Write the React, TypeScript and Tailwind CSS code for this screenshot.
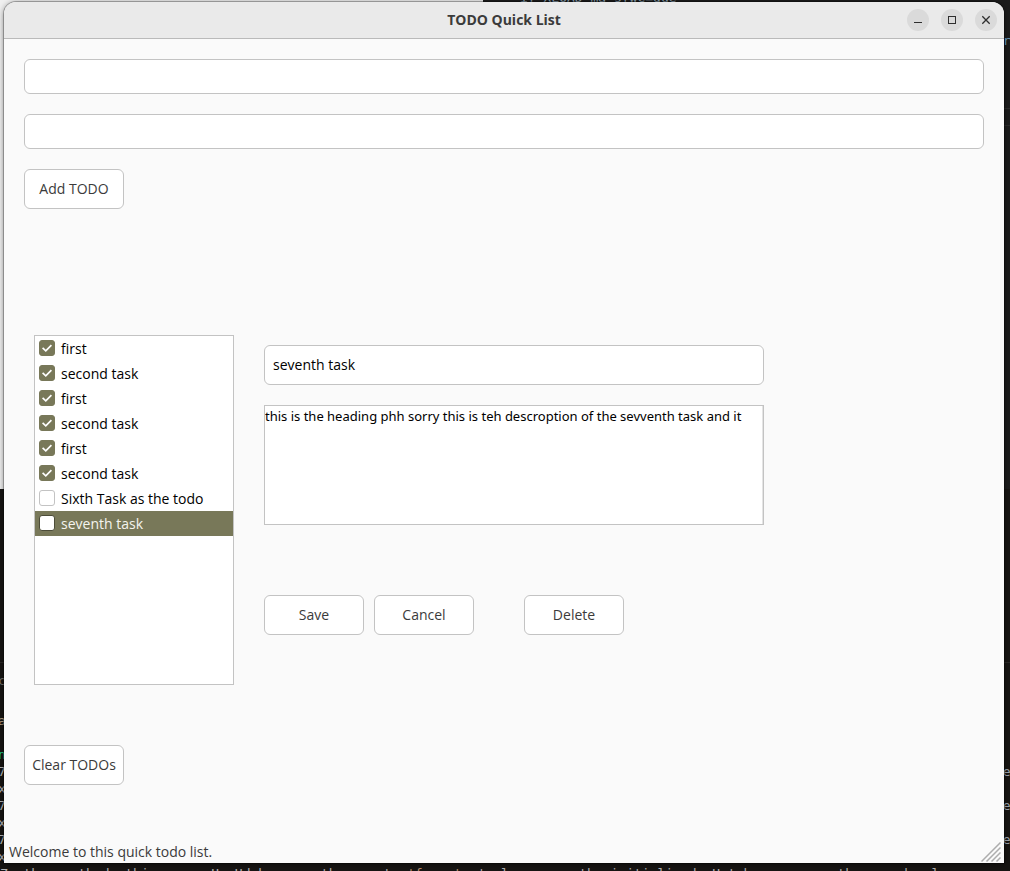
import { useState } from "react";

const initialTasks = [
  { title: "first", done: true },
  { title: "second task", done: true },
  { title: "first", done: true },
  { title: "second task", done: true },
  { title: "first", done: true },
  { title: "second task", done: true },
  { title: "Sixth Task as the todo", done: false },
  { title: "seventh task", done: false },
];

const buttonClass =
  "h-10 w-[100px] shrink-0 whitespace-nowrap rounded-[6px] border border-[#c3c3c3] bg-white text-center text-[#3b3b3b]";
const fieldClass =
  "block rounded-[6px] border border-[#c3c3c3] bg-white px-2 pb-0.5 text-black outline-none";

const leftFragments = [
  { text: "c", style: "top-[672px] text-[#77736c]" },
  { text: "a", style: "top-[712px] text-[#b9a184]" },
  { text: "n", style: "top-[746px] text-[#23d18b]" },
  { text: "7", style: "top-[763px] text-[#b8b8b8]" },
  { text: "x", style: "top-[780px] text-[#b8b8b8]" },
  { text: "7", style: "top-[797px] text-[#b8b8b8]" },
  { text: "x", style: "top-[814px] text-[#b8b8b8]" },
  { text: "7", style: "top-[831px] text-[#b8b8b8]" },
  { text: "x", style: "top-[848px] text-[#b8b8b8]" },
];

const rightFragments = [
  { text: " r", style: "top-[32px] text-[#6a9fc4]" },
  { text: "ue", style: "top-[763px] text-[#9fa8b3]" },
  { text: "ue", style: "top-[797px] text-[#9fa8b3]" },
  { text: "ue", style: "top-[831px] text-[#9fa8b3]" },
];

function Desktop() {
  return (
    <div
      aria-hidden="true"
      className="absolute inset-0 overflow-hidden bg-[#1c1c1c] font-['DejaVu_Sans_Mono',monospace] text-[13px] leading-[17px]"
    >
      <div className="absolute inset-x-0 bottom-0 top-[489px] bg-[#171513]" />
      <div className="absolute left-0 top-0 h-[489px] w-[483px] bg-[#f0f0f0]" />
      <div className="absolute right-0 top-[108px] h-[18px] w-[6px] border-y border-[#2c2c2c]" />
      <div className="absolute inset-x-0 top-[662px] h-px bg-[#2a2826]" />
      <div className="absolute left-[520px] top-[-11px] whitespace-pre text-[#8fa6b5]">
        if XLOAD ma`s[wC=due
      </div>
      {leftFragments.map((f, i) => (
        <span key={i} className={"absolute left-[-2px] " + f.style}>
          {f.text}
        </span>
      ))}
      {rightFragments.map((f, i) => (
        <span key={i} className={"absolute left-[995px] whitespace-pre " + f.style}>
          {f.text}
        </span>
      ))}
      <div className="absolute left-0 top-[865px] whitespace-pre text-[#b3b3b3]">
        {"Z  the  method  this  may  U  Hd be  on  the  next  "}
        <span className="text-[#b98d6a]">{"'format  "}</span>
        {"'value  may  the initialized  Hat be  a  may  the  need  al"}
      </div>
    </div>
  );
}

function TitleBar() {
  const control =
    "flex size-[22px] items-center justify-center rounded-full bg-[#dadada] text-[#2e2e2e]";
  return (
    <header className="grid h-[37px] shrink-0 grid-cols-[1fr_auto_1fr] items-center border-b border-[#bababa] bg-[#eaeaea] px-[7px]">
      <span />
      <h1 className="text-[14px] font-bold text-[#3b3b3b]">TODO Quick List</h1>
      <div className="flex justify-end gap-3">
        <button type="button" aria-label="Minimize" className={control}>
          <svg viewBox="0 0 22 22" className="size-[22px]" shapeRendering="crispEdges">
            <rect x="7" y="13" width="8" height="1" fill="currentColor" />
          </svg>
        </button>
        <button type="button" aria-label="Maximize" className={control}>
          <svg viewBox="0 0 22 22" className="size-[22px]" shapeRendering="crispEdges">
            <rect x="7.5" y="7.5" width="7" height="7" fill="none" stroke="currentColor" />
          </svg>
        </button>
        <button type="button" aria-label="Close" className={control}>
          <svg viewBox="0 0 22 22" className="size-[22px]">
            <path d="M7.3 7.3 14.7 14.7M14.7 7.3 7.3 14.7" stroke="currentColor" strokeWidth="1.3" />
          </svg>
        </button>
      </div>
    </header>
  );
}

export default function App() {
  const [tasks, setTasks] = useState(initialTasks);
  const [selected, setSelected] = useState(7);

  const toggle = (index: number) =>
    setTasks(tasks.map((t, i) => (i === index ? { ...t, done: !t.done } : t)));

  return (
    <div className="relative flex min-h-screen flex-col pb-2 pl-1 pr-[6px] pt-[2px] font-['Open_Sans','Noto_Sans',sans-serif] text-[14px] leading-5">
      <Desktop />
      <div className="relative flex flex-1 flex-col overflow-hidden rounded-t-[12px] bg-[#fafafa] shadow-[0_0_0_1px_rgba(0,0,0,0.25),0_1px_6px_rgba(0,0,0,0.5)]">
        <TitleBar />
        <main className="flex flex-1 flex-col px-5 pt-5">
          <input aria-label="Task title" className={fieldClass + " h-[35px] w-full"} />
          <input aria-label="Task description" className={fieldClass + " mt-5 h-[35px] w-full"} />
          <button type="button" className={buttonClass + " mt-5"}>
            Add TODO
          </button>

          <div className="mt-[126px] flex gap-[30px] pl-[10px]">
            <ul className="h-[350px] w-[200px] shrink-0 border border-[#c3c3c3] bg-white">
              {tasks.map((task, i) => (
                <li
                  key={i}
                  onClick={() => setSelected(i)}
                  className={
                    "flex h-[25px] pl-1 " +
                    (i === selected ? "bg-[#787859] text-[#f4f4ee]" : "text-black")
                  }
                >
                  <label className="flex items-start gap-[6px] leading-[25px]">
                    <span className="mt-1 grid size-4">
                      <input
                        type="checkbox"
                        checked={task.done}
                        onChange={() => toggle(i)}
                        className={
                          "col-start-1 row-start-1 size-4 appearance-none rounded-[3px] border bg-white checked:border-[#787859] checked:bg-[#787859] " +
                          (i === selected ? "border-[#4c4c38]" : "border-[#c3c3c3]")
                        }
                      />
                      {task.done && (
                        <svg
                          viewBox="0 0 16 16"
                          className="pointer-events-none col-start-1 row-start-1 size-4"
                          fill="none"
                          stroke="#fff"
                          strokeWidth="1.7"
                        >
                          <path d="M3.6 7.8 6.8 10.8 12.4 5.2" />
                        </svg>
                      )}
                    </span>
                    {task.title}
                  </label>
                </li>
              ))}
            </ul>

            <section className="flex w-[500px] flex-col pt-[10px]">
              <input
                aria-label="Selected task title"
                defaultValue="seventh task"
                className={fieldClass + " h-10 w-full"}
              />
              <textarea
                aria-label="Selected task description"
                wrap="off"
                defaultValue="this is the heading phh sorry this is teh descroption of the sevventh task and it"
                className="mt-5 block h-[120px] w-full resize-none overflow-hidden border border-[#c3c3c3] bg-white font-['Noto_Sans',sans-serif] text-[13px] text-black shadow-[inset_-1px_0_0_#e4e4e4] outline-none"
              />
              <div className="mt-[70px] flex gap-[10px]">
                <button type="button" className={buttonClass}>
                  Save
                </button>
                <button type="button" className={buttonClass}>
                  Cancel
                </button>
                <button type="button" className={buttonClass + " ml-10"}>
                  Delete
                </button>
              </div>
            </section>
          </div>

          <button type="button" className={buttonClass + " mt-[60px]"}>
            Clear TODOs
          </button>
        </main>
        <footer className="flex items-start justify-between pl-[5px] pr-[3px] text-[#3b3b3b]">
          <p>Welcome to this quick todo list.</p>
          <svg viewBox="0 0 20 20" className="mb-[1px] size-5" stroke="#adadad" strokeWidth="1.5">
            <path d="M0.5 19.5 19.5 0.5M5.5 19.5 19.5 5.5M10.5 19.5 19.5 10.5M15.5 19.5 19.5 15.5" />
          </svg>
        </footer>
      </div>
    </div>
  );
}
